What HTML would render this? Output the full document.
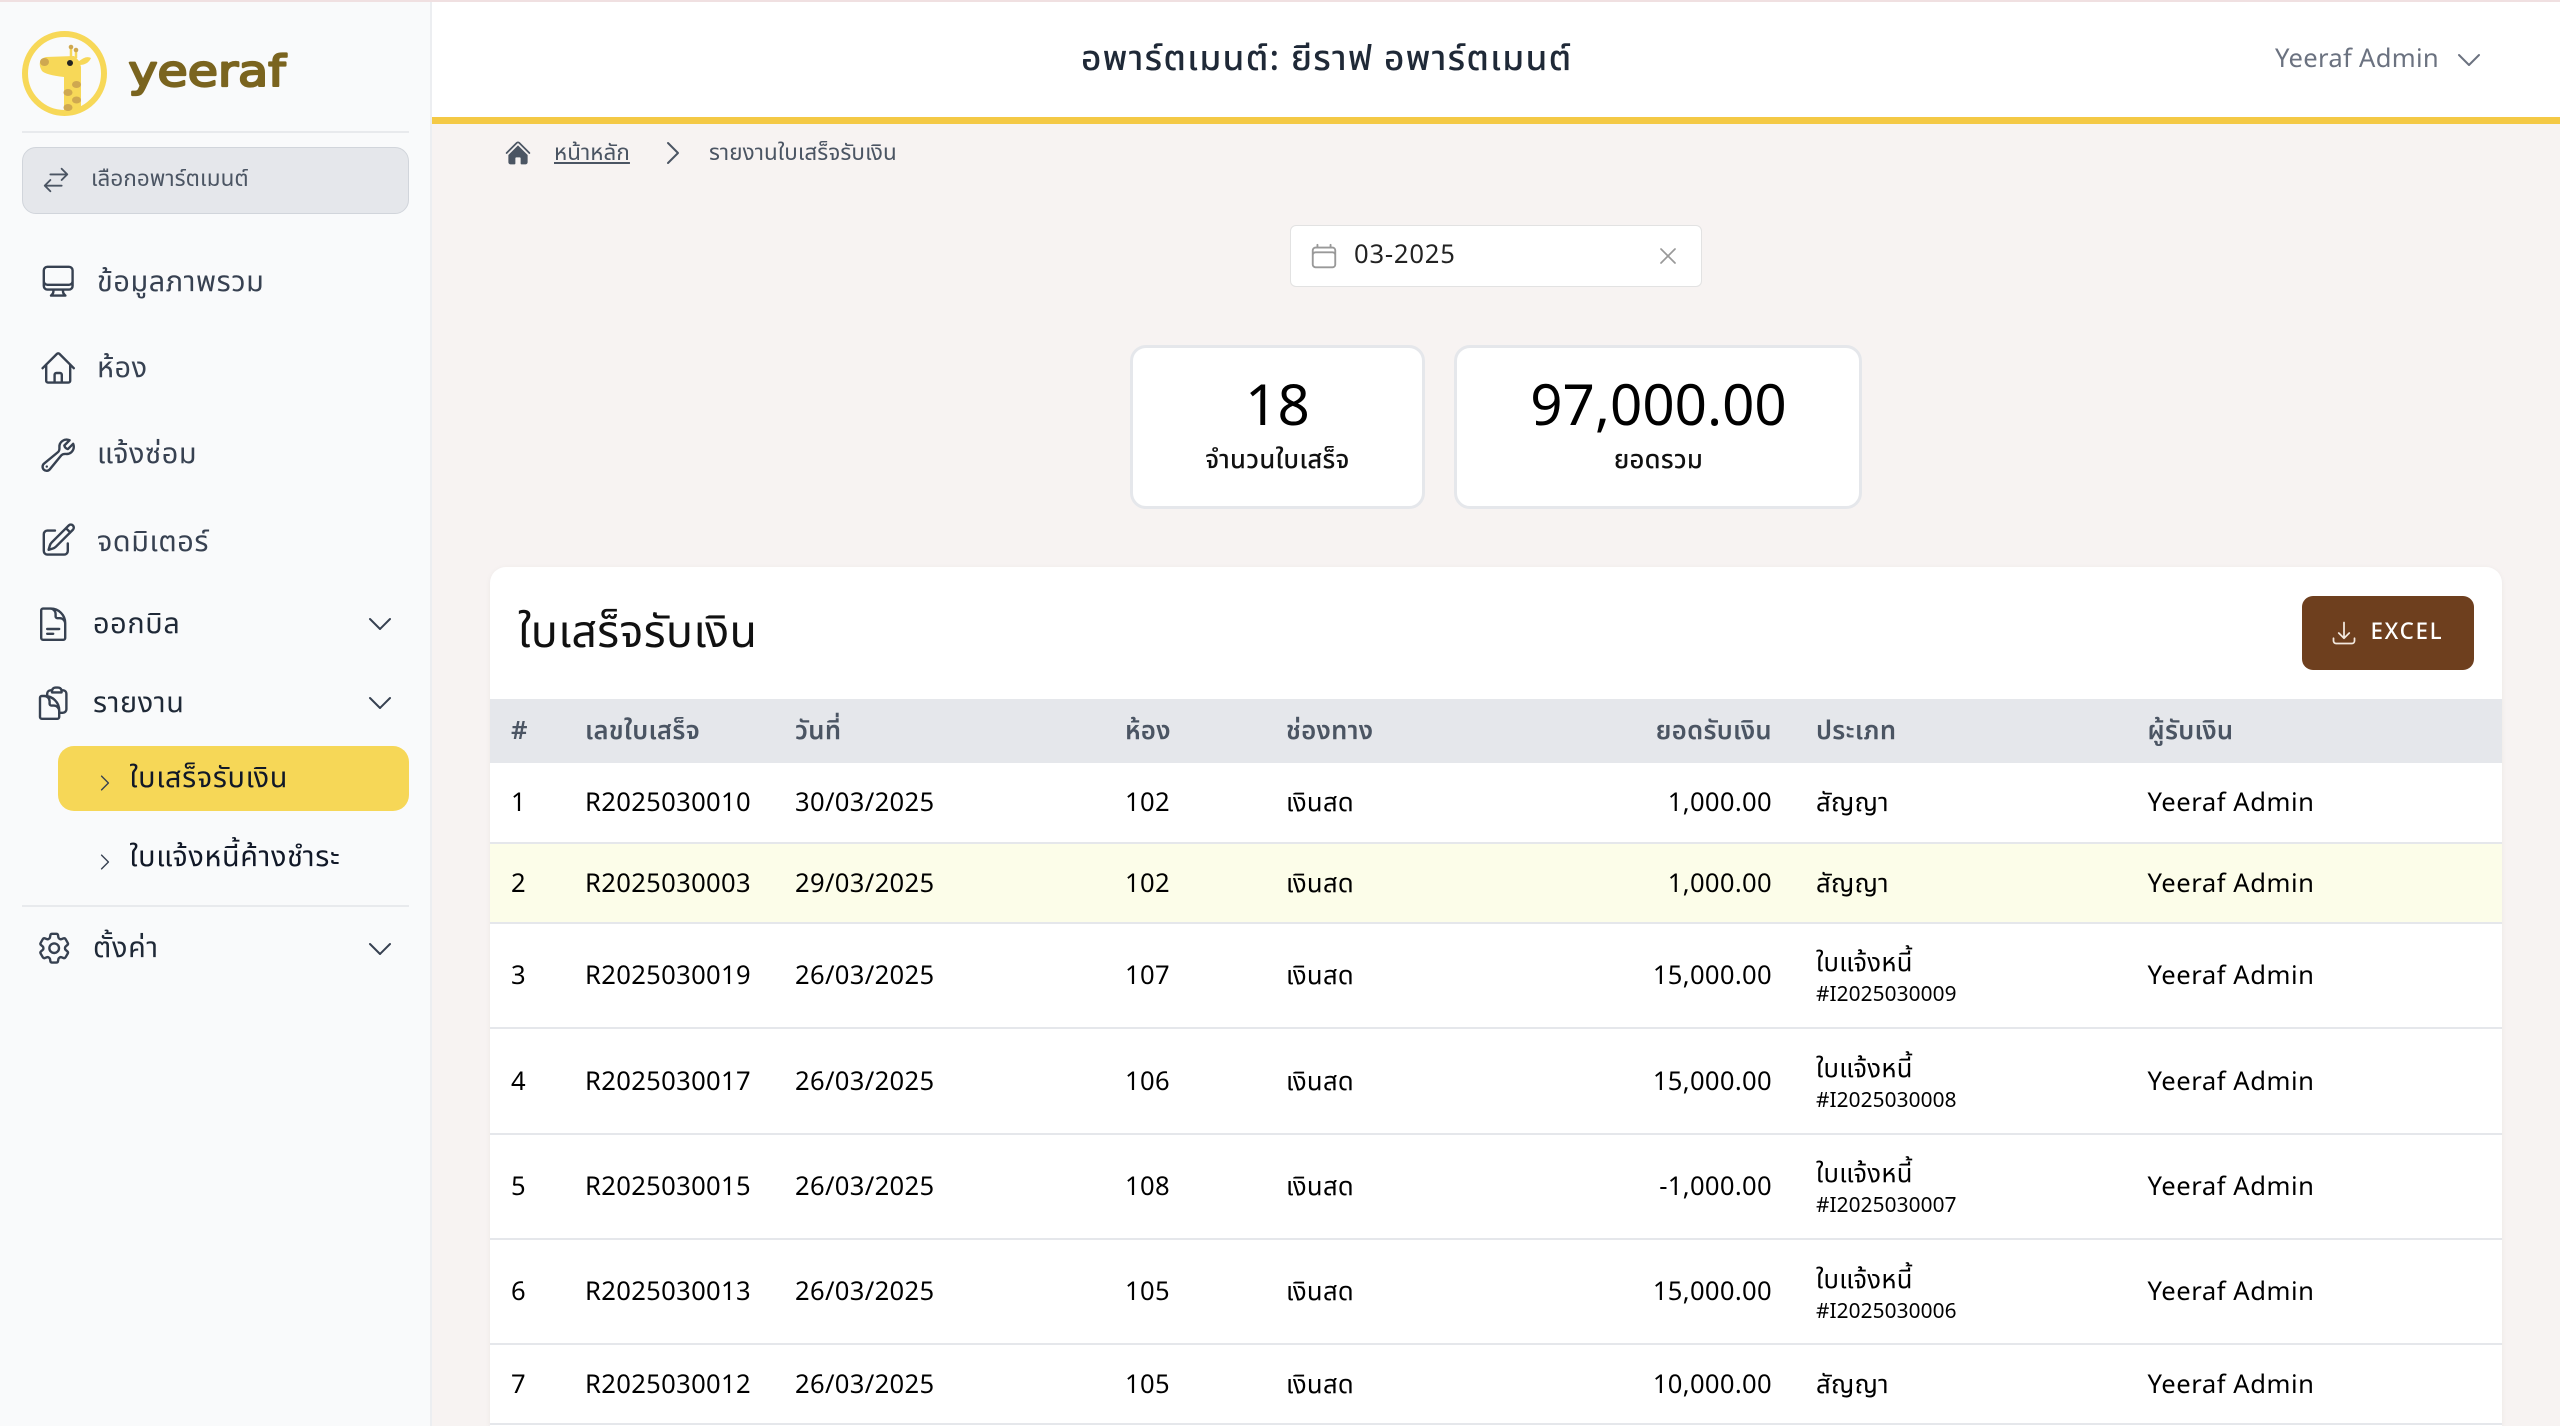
<!DOCTYPE html>
<html lang="th"><head><meta charset="utf-8"><title>ใบเสร็จรับเงิน</title>
<style>
*{box-sizing:border-box;margin:0;padding:0}
html,body{width:2560px;height:1426px;overflow:hidden;background:#f7f3f2}
body{position:relative;font-family:"Noto Sans Thai","Noto Sans","Liberation Sans","DejaVu Sans","Noto Sans CJK SC",sans-serif;color:#000;font-size:25.6px}
.a{position:absolute}
.t{position:absolute;white-space:nowrap;height:50px;line-height:50px;margin-top:-23.5px}
svg.i{position:absolute;fill:none;stroke:currentColor;stroke-width:1.5;stroke-linecap:round;stroke-linejoin:round}
#side{position:absolute;left:0;top:0;width:432px;height:1426px;background:#f9fafb;border-right:2px solid #eceef1}
.m{color:#374151;font-size:28.8px;letter-spacing:.6px}
.n{color:#1f2937;font-size:28.8px;letter-spacing:.65px}
.row{position:absolute;left:490px;width:2012px;border-bottom:2px solid #e5e7eb;background:#fff;letter-spacing:.33px}
.row span{position:absolute;top:50%;margin-top:-23.5px;height:50px;line-height:50px;white-space:nowrap}
.c1{left:21px}.c2{left:95px}.c3{left:305px}.c4{left:635px}.c5{left:796px}
.c6{right:730px}.c7{left:1326px}.c8{left:1657.5px;letter-spacing:.55px}
.row i{position:absolute;left:1326px;font-style:normal;white-space:nowrap;line-height:40px}
.row b{position:absolute;left:1326px;font-weight:400;font-size:20.8px;white-space:nowrap;line-height:30px;letter-spacing:.1px}
.hd span{color:#4b5563;font-weight:600;margin-top:-24.5px}
.hd .c8{letter-spacing:.33px}
</style></head><body>
<div class="a" style="left:0;top:0;width:2560px;height:2px;background:#f0e0e1;z-index:5"></div>

<aside id="side">
<svg class="a" style="left:0;top:0" width="300" height="130" viewBox="0 0 300 130">
<defs><clipPath id="cc"><circle cx="64.5" cy="73.5" r="40"/></clipPath></defs>
<circle cx="64.5" cy="73.5" r="39.5" fill="none" stroke="#f7d858" stroke-width="6"/>
<g clip-path="url(#cc)">
<path d="M71 47V58M76 50V58" stroke="#f7d858" stroke-width="2.5"/>
<circle cx="71" cy="47" r="2.3" fill="#cfa850"/><circle cx="76" cy="50" r="2.3" fill="#cfa850"/>
<path d="M46 57L74 56Q80 60 81 67V115H64V77Q46 75 42 71Q39 66 40 62Q41 58 46 57Z" fill="#f7d858"/>
<path d="M78 62Q86 55 91 58Q88 65 79 65Z" fill="#f7d858"/>
<circle cx="70" cy="63" r="3" fill="#222"/>
<ellipse cx="44.5" cy="62" rx="4.5" ry="4" fill="#cfa850"/>
<ellipse cx="76.5" cy="84.5" rx="4.5" ry="3.5" fill="#cfa850"/>
<ellipse cx="68" cy="92.5" rx="4.5" ry="3.5" fill="#cfa850"/>
<ellipse cx="76.5" cy="100" rx="4.5" ry="3.5" fill="#cfa850"/>
<ellipse cx="68" cy="107.5" rx="4.5" ry="3.5" fill="#cfa850"/>
</g>
<text x="128.5" y="86" font-family="DejaVu Sans" font-size="43" fill="#7a641f" stroke="#7a641f" stroke-width="2.2" stroke-linejoin="round" stroke-linecap="round" textLength="157" lengthAdjust="spacingAndGlyphs">yeeraf</text>
</svg>
<div class="a" style="left:22px;top:131px;width:387px;height:2px;background:#e8eaed"></div>
<div class="a" style="left:22px;top:147px;width:387px;height:67px;background:#e5e7eb;border:1px solid #d1d5db;border-radius:14px"></div>
<svg class="i" style="left:41px;top:165px;color:#4b5563" width="30" height="30" viewBox="0 0 24 24"><path d="M7.5 21 3 16.5m0 0L7.5 12M3 16.5h13.5m0-13.5L21 7.5m0 0L16.5 12M21 7.5H7.5"/></svg>
<div class="t" style="left:91px;top:178px;font-size:22.4px;color:#4b5563;letter-spacing:.1px">เลือกอพาร์ตเมนต์</div>

<svg class="i" style="left:39px;top:262px;color:#374151" width="38.4" height="38.4" viewBox="0 0 24 24"><path d="M9 17.25v1.007a3 3 0 0 1-.879 2.122L7.5 21h9l-.621-.621A3 3 0 0 1 15 18.257V17.25m6-12V15a2.25 2.25 0 0 1-2.25 2.25H5.25A2.25 2.25 0 0 1 3 15V5.25m18 0A2.25 2.25 0 0 0 18.75 3H5.25A2.25 2.25 0 0 0 3 5.25m18 0V12a2.25 2.25 0 0 1-2.25 2.25H5.25A2.25 2.25 0 0 1 3 12V5.25"/></svg>
<div class="t m" style="left:97px;top:280px">ข้อมูลภาพรวม</div>
<svg class="i" style="left:39px;top:349px;color:#374151" width="38.4" height="38.4" viewBox="0 0 24 24"><path d="m2.25 12 8.954-8.955c.44-.439 1.152-.439 1.591 0L21.75 12M4.5 9.75v10.125c0 .621.504 1.125 1.125 1.125H9.75v-4.875c0-.621.504-1.125 1.125-1.125h2.25c.621 0 1.125.504 1.125 1.125V21h4.125c.621 0 1.125-.504 1.125-1.125V9.75M8.25 21h8.25"/></svg>
<div class="t m" style="left:97px;top:366px">ห้อง</div>
<svg class="i" style="left:39px;top:436px;color:#374151" width="38.4" height="38.4" viewBox="0 0 24 24"><path d="M21.75 6.75a4.5 4.5 0 0 1-4.884 4.484c-1.076-.091-2.264.071-2.95.904l-7.152 8.684a2.548 2.548 0 1 1-3.586-3.586l8.684-7.152c.833-.686.995-1.874.904-2.95a4.5 4.5 0 0 1 6.336-4.486l-3.276 3.276a3.004 3.004 0 0 0 2.25 2.25l3.276-3.276c.256.565.398 1.192.398 1.852Z"/><path d="M4.867 19.125h.008v.008h-.008v-.008Z"/></svg>
<div class="t m" style="left:97px;top:452px">แจ้งซ่อม</div>
<svg class="i" style="left:39px;top:521px;color:#374151" width="38.4" height="38.4" viewBox="0 0 24 24"><path d="m16.862 4.487 1.687-1.688a1.875 1.875 0 1 1 2.652 2.652L10.582 16.07a4.5 4.5 0 0 1-1.897 1.13L6 18l.8-2.685a4.5 4.5 0 0 1 1.13-1.897l8.932-8.931Zm0 0L19.5 7.125M18 14v4.75A2.25 2.25 0 0 1 15.75 21H5.25A2.25 2.25 0 0 1 3 18.75V8.25A2.25 2.25 0 0 1 5.25 6H10"/></svg>
<div class="t m" style="left:97px;top:540px">จดมิเตอร์</div>
<svg class="i" style="left:34px;top:605px;color:#374151" width="38.4" height="38.4" viewBox="0 0 24 24"><path d="M19.5 14.25v-2.625a3.375 3.375 0 0 0-3.375-3.375h-1.5A1.125 1.125 0 0 1 13.5 7.125v-1.5a3.375 3.375 0 0 0-3.375-3.375H8.25m0 12.75h7.5m-7.5 3H12M10.5 2.25H5.625c-.621 0-1.125.504-1.125 1.125v17.25c0 .621.504 1.125 1.125 1.125h12.75c.621 0 1.125-.504 1.125-1.125V11.25a9 9 0 0 0-9-9Z"/></svg>
<div class="t n" style="left:93px;top:622px">ออกบิล</div>
<svg class="i" style="left:364px;top:608px;color:#374151" width="32" height="32" viewBox="0 0 24 24"><path d="m19.5 8.25-7.5 7.5-7.5-7.5"/></svg>
<svg class="i" style="left:34px;top:684px;color:#374151" width="38.4" height="38.4" viewBox="0 0 24 24"><path d="M8.25 7.5V6.108c0-1.135.845-2.098 1.976-2.192.373-.03.748-.057 1.123-.08M15.75 18H18a2.25 2.25 0 0 0 2.25-2.25V6.108c0-1.135-.845-2.098-1.976-2.192a48.424 48.424 0 0 0-1.123-.08M15.75 18.75v-1.875a3.375 3.375 0 0 0-3.375-3.375h-1.5a1.125 1.125 0 0 1-1.125-1.125v-1.5A3.375 3.375 0 0 0 6.375 7.5H5.25m11.9-3.664A2.251 2.251 0 0 0 15 2.25h-1.5a2.251 2.251 0 0 0-2.15 1.586m5.8 0c.065.21.1.433.1.664v.75h-6V4.5c0-.231.035-.454.1-.664M6.75 7.5H4.875c-.621 0-1.125.504-1.125 1.125v12c0 .621.504 1.125 1.125 1.125h9.75c.621 0 1.125-.504 1.125-1.125V16.5a9 9 0 0 0-9-9Z"/></svg>
<div class="t n" style="left:93px;top:701px">รายงาน</div>
<svg class="i" style="left:364px;top:687px;color:#374151" width="32" height="32" viewBox="0 0 24 24"><path d="m19.5 8.25-7.5 7.5-7.5-7.5"/></svg>
<div class="a" style="left:58px;top:746px;width:351px;height:65px;background:#f6d757;border-radius:16px"></div>
<svg class="i" style="left:94px;top:772px;color:#374151" width="22" height="22" viewBox="0 0 24 24"><path d="m8.25 4.5 7.5 7.5-7.5 7.5"/></svg>
<div class="t n" style="left:129.5px;top:776px;color:#111827">ใบเสร็จรับเงิน</div>
<svg class="i" style="left:94px;top:851px;color:#374151" width="22" height="22" viewBox="0 0 24 24"><path d="m8.25 4.5 7.5 7.5-7.5 7.5"/></svg>
<div class="t n" style="left:129.5px;top:855px;color:#111827">ใบแจ้งหนี้ค้างชำระ</div>
<div class="a" style="left:22px;top:905px;width:387px;height:2px;background:#e8eaed"></div>
<svg class="i" style="left:35px;top:929px;color:#374151" width="38.4" height="38.4" viewBox="0 0 24 24"><path d="M9.594 3.94c.09-.542.56-.94 1.11-.94h2.593c.55 0 1.02.398 1.11.94l.213 1.281c.063.374.313.686.645.87.074.04.147.083.22.127.325.196.72.257 1.075.124l1.217-.456a1.125 1.125 0 0 1 1.37.49l1.296 2.247a1.125 1.125 0 0 1-.26 1.431l-1.003.827c-.293.241-.438.613-.43.992a7.723 7.723 0 0 1 0 .255c-.008.378.137.75.43.991l1.004.827c.424.35.534.955.26 1.43l-1.298 2.247a1.125 1.125 0 0 1-1.369.491l-1.217-.456c-.355-.133-.75-.072-1.076.124a6.47 6.47 0 0 1-.22.128c-.331.183-.581.495-.644.869l-.213 1.281c-.09.543-.56.94-1.11.94h-2.594c-.55 0-1.019-.398-1.11-.94l-.213-1.281c-.062-.374-.312-.686-.644-.87a6.52 6.52 0 0 1-.22-.127c-.325-.196-.72-.257-1.076-.124l-1.217.456a1.125 1.125 0 0 1-1.369-.49l-1.297-2.247a1.125 1.125 0 0 1 .26-1.431l1.004-.827c.292-.24.437-.613.43-.991a6.932 6.932 0 0 1 0-.255c.007-.38-.138-.751-.43-.992l-1.004-.827a1.125 1.125 0 0 1-.26-1.43l1.297-2.247a1.125 1.125 0 0 1 1.37-.491l1.216.456c.356.133.751.072 1.076-.124.072-.044.146-.086.22-.128.332-.183.582-.495.644-.869l.214-1.28Z"/><path d="M15 12a3 3 0 1 1-6 0 3 3 0 0 1 6 0Z"/></svg>
<div class="t n" style="left:93px;top:946px">ตั้งค่า</div>
<svg class="i" style="left:364px;top:933px;color:#374151" width="32" height="32" viewBox="0 0 24 24"><path d="m19.5 8.25-7.5 7.5-7.5-7.5"/></svg>
</aside>

<header class="a" style="left:432px;top:0;width:2128px;height:124px;background:#fff;border-bottom:7px solid #f4c945"></header>
<div class="t" style="left:1081px;top:58.5px;font-size:35.2px;font-weight:500;color:#1f2937;letter-spacing:1.27px">อพาร์ตเมนต์: ยีราฟ อพาร์ตเมนต์</div>
<div class="t" style="left:2275px;top:58.5px;font-size:25.6px;color:#6b7280;letter-spacing:.3px">Yeeraf Admin</div>
<svg class="i" style="left:2453px;top:44px;color:#6b7280" width="32" height="32" viewBox="0 0 24 24"><path d="m19.5 8.25-7.5 7.5-7.5-7.5"/></svg>

<svg class="a" style="left:504px;top:138.5px;color:#4b5563" width="28" height="28" viewBox="0 0 24 24" fill="#4b5563"><path d="M11.47 3.841a.75.75 0 0 1 1.06 0l8.69 8.69a.75.75 0 1 0 1.06-1.061l-8.689-8.69a2.25 2.25 0 0 0-3.182 0l-8.69 8.69a.75.75 0 1 0 1.061 1.06l8.69-8.689Z"/><path d="m12 5.432 8.159 8.159c.03.03.06.058.091.086v6.198c0 1.035-.84 1.875-1.875 1.875H15a.75.75 0 0 1-.75-.75v-4.5a.75.75 0 0 0-.75-.75h-3a.75.75 0 0 0-.75.75V21a.75.75 0 0 1-.75.75H5.625a1.875 1.875 0 0 1-1.875-1.875v-6.198a2.29 2.29 0 0 0 .091-.086L12 5.432Z"/></svg>
<div class="t" style="left:554px;top:152.5px;font-size:22.4px;color:#4b5563;text-decoration:underline;letter-spacing:.1px">หน้าหลัก</div>
<svg class="i" style="left:657px;top:137px;color:#4b5563" width="32" height="32" viewBox="0 0 24 24"><path d="m8.25 4.5 7.5 7.5-7.5 7.5"/></svg>
<div class="t" style="left:709px;top:152.5px;font-size:22.4px;color:#4b5563;letter-spacing:.12px">รายงานใบเสร็จรับเงิน</div>

<div class="a" style="left:1290px;top:225px;width:412px;height:62px;background:#fff;border:1px solid #e2e2e2;border-radius:6px"></div>
<svg class="i" style="left:1309px;top:241px;color:#999" width="30" height="30" viewBox="0 0 24 24"><path d="M6.75 3v2.25M17.25 3v2.25M3 18.75V7.5a2.25 2.25 0 0 1 2.25-2.25h13.5A2.25 2.25 0 0 1 21 7.5v11.25m-18 0A2.25 2.25 0 0 0 5.25 21h13.5A2.25 2.25 0 0 0 21 18.75m-18 0v-7.5A2.25 2.25 0 0 1 5.25 9h13.5A2.25 2.25 0 0 1 21 11.25v7.5"/></svg>
<div class="t" style="left:1354px;top:254.5px;font-size:25.6px;color:#222;letter-spacing:.8px">03-2025</div>
<svg class="a" style="left:1658px;top:246px" width="20" height="20" viewBox="0 0 20 20" fill="none" stroke="#999" stroke-width="1.7" stroke-linecap="round"><path d="M3 3L17 17M17 3L3 17"/></svg>

<div class="a" style="left:1130px;top:345px;width:295px;height:164px;background:#fff;border:3px solid #e5e7eb;border-radius:16px"></div>
<div class="a" style="left:1454px;top:345px;width:408px;height:164px;background:#fff;border:3px solid #e5e7eb;border-radius:16px"></div>
<div class="t" style="left:1131px;width:293px;text-align:center;top:407.5px;font-size:56.5px;color:#000">18</div>
<div class="t" style="left:1455px;width:407px;text-align:center;top:407.5px;font-size:56.5px;color:#000">97,000.00</div>
<div class="t" style="left:1131px;width:293px;text-align:center;top:459.5px;font-size:25.6px;font-weight:500;color:#111;letter-spacing:.3px">จำนวนใบเสร็จ</div>
<div class="t" style="left:1455px;width:407px;text-align:center;top:459.5px;font-size:25.6px;font-weight:500;color:#111;letter-spacing:.3px">ยอดรวม</div>

<section class="a" style="left:490px;top:567px;width:2012px;height:860px;background:#fff;border-radius:16px 16px 0 0;box-shadow:0 1px 6px rgba(0,0,0,.05)"></section>
<div class="t" style="left:518px;top:632.5px;font-size:44.8px;color:#111;letter-spacing:.35px">ใบเสร็จรับเงิน</div>
<div class="a" style="left:2302px;top:596px;width:172px;height:74px;background:#6e3f1e;border-radius:11px"></div>
<svg class="i" style="left:2330px;top:619px;color:#f3e9df" width="28" height="28" viewBox="0 0 24 24"><path d="M3 16.5v2.25A2.25 2.25 0 0 0 5.25 21h13.5A2.25 2.25 0 0 0 21 18.75V16.5M16.5 12 12 16.5m0 0L7.5 12m4.5 4.5V3"/></svg>
<div class="t" style="left:2370.5px;top:631.5px;font-size:22.4px;font-weight:500;color:#fff;letter-spacing:1.7px">EXCEL</div>

<div class="row hd" style="top:699px;height:64px;background:#e5e7eb;border:0"><span class="c1">#</span><span class="c2">เลขใบเสร็จ</span><span class="c3">วันที่</span><span class="c4">ห้อง</span><span class="c5">ช่องทาง</span><span class="c6">ยอดรับเงิน</span><span class="c7">ประเภท</span><span class="c8">ผู้รับเงิน</span></div>

<div class="row" style="top:763px;height:81px"><span class="c1">1</span><span class="c2">R2025030010</span><span class="c3">30/03/2025</span><span class="c4">102</span><span class="c5">เงินสด</span><span class="c6">1,000.00</span><span class="c7">สัญญา</span><span class="c8">Yeeraf Admin</span></div>
<div class="row" style="top:844px;height:80px;background:#fcfde9"><span class="c1">2</span><span class="c2">R2025030003</span><span class="c3">29/03/2025</span><span class="c4">102</span><span class="c5">เงินสด</span><span class="c6">1,000.00</span><span class="c7">สัญญา</span><span class="c8">Yeeraf Admin</span></div>
<div class="row" style="top:924px;height:105px"><span class="c1">3</span><span class="c2">R2025030019</span><span class="c3">26/03/2025</span><span class="c4">107</span><span class="c5">เงินสด</span><span class="c6">15,000.00</span><i style="top:20px">ใบแจ้งหนี้</i><b style="top:57px">#I2025030009</b><span class="c8">Yeeraf Admin</span></div>
<div class="row" style="top:1029px;height:106px"><span class="c1">4</span><span class="c2">R2025030017</span><span class="c3">26/03/2025</span><span class="c4">106</span><span class="c5">เงินสด</span><span class="c6">15,000.00</span><i style="top:21px">ใบแจ้งหนี้</i><b style="top:58px">#I2025030008</b><span class="c8">Yeeraf Admin</span></div>
<div class="row" style="top:1135px;height:105px"><span class="c1">5</span><span class="c2">R2025030015</span><span class="c3">26/03/2025</span><span class="c4">108</span><span class="c5">เงินสด</span><span class="c6">-1,000.00</span><i style="top:20px">ใบแจ้งหนี้</i><b style="top:57px">#I2025030007</b><span class="c8">Yeeraf Admin</span></div>
<div class="row" style="top:1240px;height:105px"><span class="c1">6</span><span class="c2">R2025030013</span><span class="c3">26/03/2025</span><span class="c4">105</span><span class="c5">เงินสด</span><span class="c6">15,000.00</span><i style="top:21px">ใบแจ้งหนี้</i><b style="top:58px">#I2025030006</b><span class="c8">Yeeraf Admin</span></div>
<div class="row" style="top:1345px;height:80px"><span class="c1">7</span><span class="c2">R2025030012</span><span class="c3">26/03/2025</span><span class="c4">105</span><span class="c5">เงินสด</span><span class="c6">10,000.00</span><span class="c7">สัญญา</span><span class="c8">Yeeraf Admin</span></div>
</body></html>
